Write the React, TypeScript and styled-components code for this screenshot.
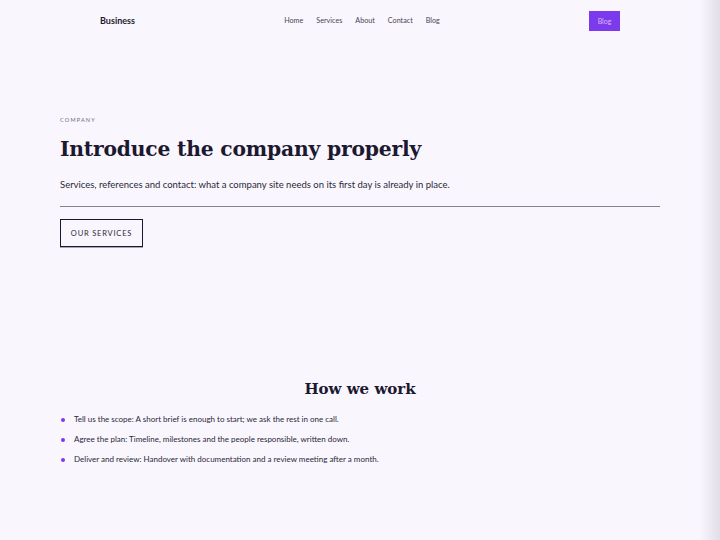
import React from "react";
import styled, { createGlobalStyle } from "styled-components";

const Global = createGlobalStyle`
  html, body { margin: 0; padding: 0; background: #f9f6fe; }
  body { font-family: Lato, "Liberation Sans", sans-serif; color: #1f1b2e; }
  * { box-sizing: border-box; }
`;

const Page = styled.div`
  min-height: 540px;
  background: #f9f6fe;
`;

const EdgeShade = styled.div`
  position: fixed;
  top: 0;
  right: 0;
  width: 20px;
  height: 100%;
  background: linear-gradient(to right, rgba(230, 226, 238, 0) 0%, rgba(222, 219, 230, 0.9) 100%);
  pointer-events: none;
`;

const Nav = styled.header`
  width: 520px;
  margin: 0 auto;
  height: 41px;
  display: grid;
  grid-template-columns: 1fr auto 1fr;
  align-items: center;
`;

const Brand = styled.div`
  font-family: Lato, sans-serif;
  font-weight: 700;
  font-size: 9px;
  color: #1f1b2e;
`;

const Links = styled.nav`
  display: flex;
  gap: 13px;
  margin-left: 4px;
`;

const NavLink = styled.a`
  font-family: Lato, sans-serif;
  font-size: 7.2px;
  color: #4a4658;
  text-decoration: none;
`;

const CtaWrap = styled.div`
  display: flex;
  justify-content: flex-end;
`;

const Cta = styled.a`
  display: flex;
  align-items: center;
  justify-content: center;
  width: 31px;
  height: 20px;
  background: #7c3aed;
  color: #dcb8fb;
  font-family: Lato, sans-serif;
  font-size: 7px;
  text-decoration: none;
`;

const Hero = styled.section`
  width: 600px;
  margin: 0 auto;
  padding-top: 76px;
  display: flex;
  flex-direction: column;
  align-items: flex-start;
`;

const Eyebrow = styled.div`
  font-family: Lato, sans-serif;
  font-size: 5.5px;
  letter-spacing: 1.2px;
  color: #6b6778;
  text-transform: uppercase;
`;

const Title = styled.h1`
  margin: 14px 0 0;
  font-family: "DejaVu Serif", serif;
  font-weight: 700;
  font-size: 20.3px;
  letter-spacing: -0.2px;
  color: #1c1830;
`;

const Lead = styled.p`
  margin: 18px 0 0;
  font-family: Lato, sans-serif;
  font-size: 9.5px;
  color: #2b2838;
`;

const Rule = styled.hr`
  width: 100%;
  margin: 16px 0 0;
  border: 0;
  border-top: 1px solid #86838f;
`;

const OutlineButton = styled.a`
  margin-top: 12px;
  display: flex;
  align-items: center;
  justify-content: center;
  width: 83px;
  height: 28px;
  border: 1px solid #1c1830;
  box-shadow: 0 1px 0 #a9a6b0;
  font-family: Lato, sans-serif;
  font-size: 7.5px;
  letter-spacing: 0.8px;
  color: #2b2838;
  text-decoration: none;
`;

const Steps = styled.section`
  width: 600px;
  margin: 133px auto 0;
`;

const StepsTitle = styled.h2`
  margin: 0;
  text-align: center;
  font-family: "DejaVu Serif", serif;
  font-weight: 700;
  font-size: 15px;
  color: #1c1830;
`;

const List = styled.ul`
  list-style: none;
  margin: 17px 0 0;
  padding: 0;
  display: flex;
  flex-direction: column;
  gap: 10.5px;
`;

const Item = styled.li`
  display: flex;
  align-items: center;
  gap: 9px;
  font-family: Lato, sans-serif;
  font-size: 8px;
  color: #2b2838;
  line-height: 9.5px;
`;

const Dot = styled.span`
  width: 4.5px;
  height: 4.5px;
  margin-left: 0.5px;
  border-radius: 50%;
  background: #7c3aed;
  flex: none;
`;

const steps = [
  "Tell us the scope: A short brief is enough to start; we ask the rest in one call.",
  "Agree the plan: Timeline, milestones and the people responsible, written down.",
  "Deliver and review: Handover with documentation and a review meeting after a month.",
];

export default function App() {
  return (
    <Page>
      <Global />
      <Nav>
        <Brand>Business</Brand>
        <Links>
          <NavLink href="#">Home</NavLink>
          <NavLink href="#">Services</NavLink>
          <NavLink href="#">About</NavLink>
          <NavLink href="#">Contact</NavLink>
          <NavLink href="#">Blog</NavLink>
        </Links>
        <CtaWrap>
          <Cta href="#">Blog</Cta>
        </CtaWrap>
      </Nav>
      <Hero>
        <Eyebrow>Company</Eyebrow>
        <Title>Introduce the company properly</Title>
        <Lead>Services, references and contact: what a company site needs on its first day is already in place.</Lead>
        <Rule />
        <OutlineButton href="#">OUR SERVICES</OutlineButton>
      </Hero>
      <Steps>
        <StepsTitle>How we work</StepsTitle>
        <List>
          {steps.map((s) => (
            <Item key={s}>
              <Dot />
              {s}
            </Item>
          ))}
        </List>
      </Steps>
      <EdgeShade />
    </Page>
  );
}
